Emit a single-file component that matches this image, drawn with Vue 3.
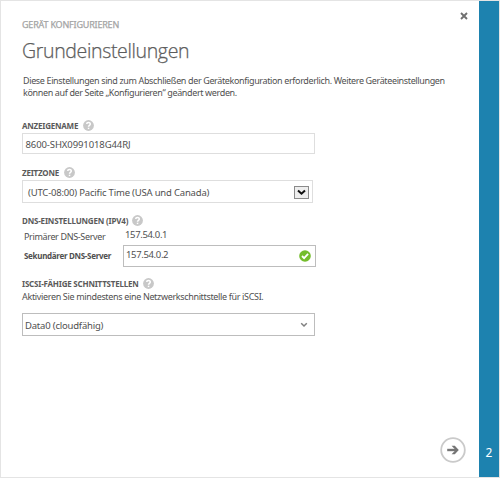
<script setup>
import { h } from 'vue'

const HelpIcon = () =>
  h('svg', { width: 11, height: 11, viewBox: '0 0 11 11', 'aria-hidden': 'true' }, [
    h('circle', { cx: 5.5, cy: 5.5, r: 5.4, fill: '#c8c8c8' }),
    h('path', {
      d: 'M3.7 4.1C3.7 1.9 7.3 1.9 7.3 4C7.3 5.3 5.5 5.3 5.5 6.8',
      fill: 'none', stroke: '#fff', 'stroke-width': 1.5,
    }),
    h('rect', { x: 4.8, y: 7.7, width: 1.5, height: 1.4, fill: '#fff' }),
  ])
</script>

<template>
  <div class="dialog">
    <main class="content">
      <button class="close" aria-label="Schließen">
        <svg width="8" height="8" viewBox="0 0 8 8"><path d="M1 1L7 7M7 1L1 7" stroke="#707070" stroke-width="1.9" /></svg>
      </button>
      <div class="step">GERÄT KONFIGURIEREN</div>
      <h1>Grundeinstellungen</h1>
      <p class="intro">
        Diese Einstellungen sind zum Abschließen der Gerätekonfiguration erforderlich. Weitere Geräteeinstellungen<br />
        können auf der Seite „Konfigurieren“ geändert werden.
      </p>

      <section class="name">
        <h2><span>ANZEIGENAME</span><HelpIcon /></h2>
        <div class="field"><span class="v-name">8600-SHX0991018G44RJ</span></div>
      </section>

      <section class="zone">
        <h2><span>ZEITZONE</span><HelpIcon /></h2>
        <div class="field">
          <span class="v-zone">(UTC-08:00) Pacific Time (USA und Canada)</span>
          <span class="drop"><svg width="13" height="11" viewBox="0 0 13 11"><path d="M3 3.4L6.5 6.7L10 3.4" fill="none" stroke="#111" stroke-width="2" /></svg></span>
        </div>
      </section>

      <section class="dns">
        <h2><span>DNS-EINSTELLUNGEN (IPV4)</span><HelpIcon /></h2>
        <div class="row primary">
          <label>Primärer DNS-Server</label>
          <span class="v-ip">157.54.0.1</span>
        </div>
        <div class="row">
          <label class="strong">Sekundärer DNS-Server</label>
          <div class="field dns-field">
            <span class="v-ip">157.54.0.2</span>
            <svg width="12" height="12" viewBox="0 0 12 12"><circle cx="6" cy="6" r="5.8" fill="#74bd2c" /><path d="M3 6L5.1 8.1L9.1 3.9" fill="none" stroke="#fff" stroke-width="1.8" /></svg>
          </div>
        </div>
      </section>

      <section class="iscsi">
        <h2><span>ISCSI-FÄHIGE SCHNITTSTELLEN</span><HelpIcon /></h2>
        <p class="hint">Aktivieren Sie mindestens eine Netzwerkschnittstelle für iSCSI.</p>
        <div class="field">
          <span class="v-data">Data0 (cloudfähig)</span>
          <svg width="8" height="6" viewBox="0 0 8 6"><path d="M1.2 1.2L4 4L6.8 1.2" fill="none" stroke="#808080" stroke-width="1.5" /></svg>
        </div>
      </section>

      <button class="next" aria-label="Weiter">
        <svg width="26" height="26" viewBox="0 0 26 26">
          <circle cx="13" cy="13" r="11.8" fill="#fff" stroke="#cacaca" stroke-width="1.8" />
          <path d="M7.2 13H17" fill="none" stroke="#757575" stroke-width="2.4" />
          <path d="M11.6 8.8H14.8L18.8 13L14.8 17.2H11.6L15.6 13Z" fill="#757575" />
        </svg>
      </button>
    </main>
    <aside class="rail">2</aside>
  </div>
</template>

<style>
body { background: #fff; }
</style>

<style scoped>
.dialog {
  box-sizing: border-box;
  display: flex;
  width: 500px;
  height: 478px;
  border: 1px solid #e4e4e4;
  background: #fff;
  color: #505050;
  font: 9px/12px "Noto Sans", "Open Sans", sans-serif;
  white-space: nowrap;
}
.content {
  box-sizing: border-box;
  position: relative;
  width: 478px;
  padding: 17px 0 0 21px;
}
button { padding: 0; border: 0; background: none; }
svg { display: block; flex: none; }
.close { position: absolute; left: 459px; top: 11px; }
.next { position: absolute; left: 439px; top: 436px; }
.step {
  height: 14px;
  color: #a4a4a4;
  line-height: 14px;
  letter-spacing: -0.2px;
  -webkit-text-stroke: 0.25px #a4a4a4;
}
h1 {
  height: 28px;
  margin: 5px 0 0;
  color: #5c5c5c;
  font: 300 19.5px/28px "Open Sans", "Noto Sans", sans-serif;
  letter-spacing: -0.35px;
  -webkit-text-stroke: 0.25px #5c5c5c;
}
.intro { height: 24px; margin: 10px 0 0 1px; letter-spacing: -0.365px; }
h2 {
  display: flex;
  align-items: center;
  gap: 5px;
  height: 12px;
  margin: 0;
  color: #5a5a5a;
  font-size: 8px;
  line-height: 12px;
  font-weight: 700;
  letter-spacing: -0.22px;
}
h2 svg { margin-bottom: 1px; }
.field {
  box-sizing: border-box;
  display: flex;
  align-items: center;
  justify-content: space-between;
  border: 1px solid #dedede;
  background: #fff;
}
.name { margin-top: 21px; }
.name .field { width: 293px; height: 21px; margin-top: 1px; padding: 2px 0 0 2.5px; }
.v-name { font-size: 9.5px; letter-spacing: -0.1px; }
.zone { margin-top: 13px; }
.zone .field { width: 291px; height: 23px; margin-top: 1px; padding: 1px 3px 0 5px; }
.v-zone { padding-top: 1px; font-size: 9.5px; letter-spacing: -0.19px; }
.drop { border: 1px solid #8a8a8a; background: #eee; }
.dns { margin-top: 12px; }
.dns h2 { gap: 4px; letter-spacing: -0.18px; }
.row { display: flex; align-items: center; }
.row label { width: 101px; padding-left: 2px; box-sizing: border-box; letter-spacing: -0.35px; }
.v-ip { font-size: 9.5px; letter-spacing: -0.35px; }
.primary { height: 18px; align-items: flex-start; }
.primary label { padding-top: 4px; width: 103px; }
.primary > span { padding-top: 2px; }
.row .strong { font-size: 8px; font-weight: 700; letter-spacing: -0.3px; }
.dns-field { width: 193px; height: 22px; padding: 0 4px 2px 2px; border-color: #bdbdbd; }
.dns-field svg { position: relative; top: 1px; }
.iscsi { margin-top: 11px; }
.iscsi h2 { gap: 4px; letter-spacing: -0.21px; }
.hint { height: 12px; margin: 1px 0 0; letter-spacing: -0.34px; }
.iscsi .field { width: 293px; height: 23px; margin-top: 10px; padding: 1px 6px 0 2px; border-color: #bdbdbd; }
.v-data { padding-top: 1px; font-size: 9.5px; letter-spacing: -0.2px; }
.rail {
  box-sizing: border-box;
  width: 20px;
  padding-top: 444px;
  background: #1d82af;
  color: #fff;
  font-size: 12px;
  line-height: 16px;
  text-align: center;
}
</style>
